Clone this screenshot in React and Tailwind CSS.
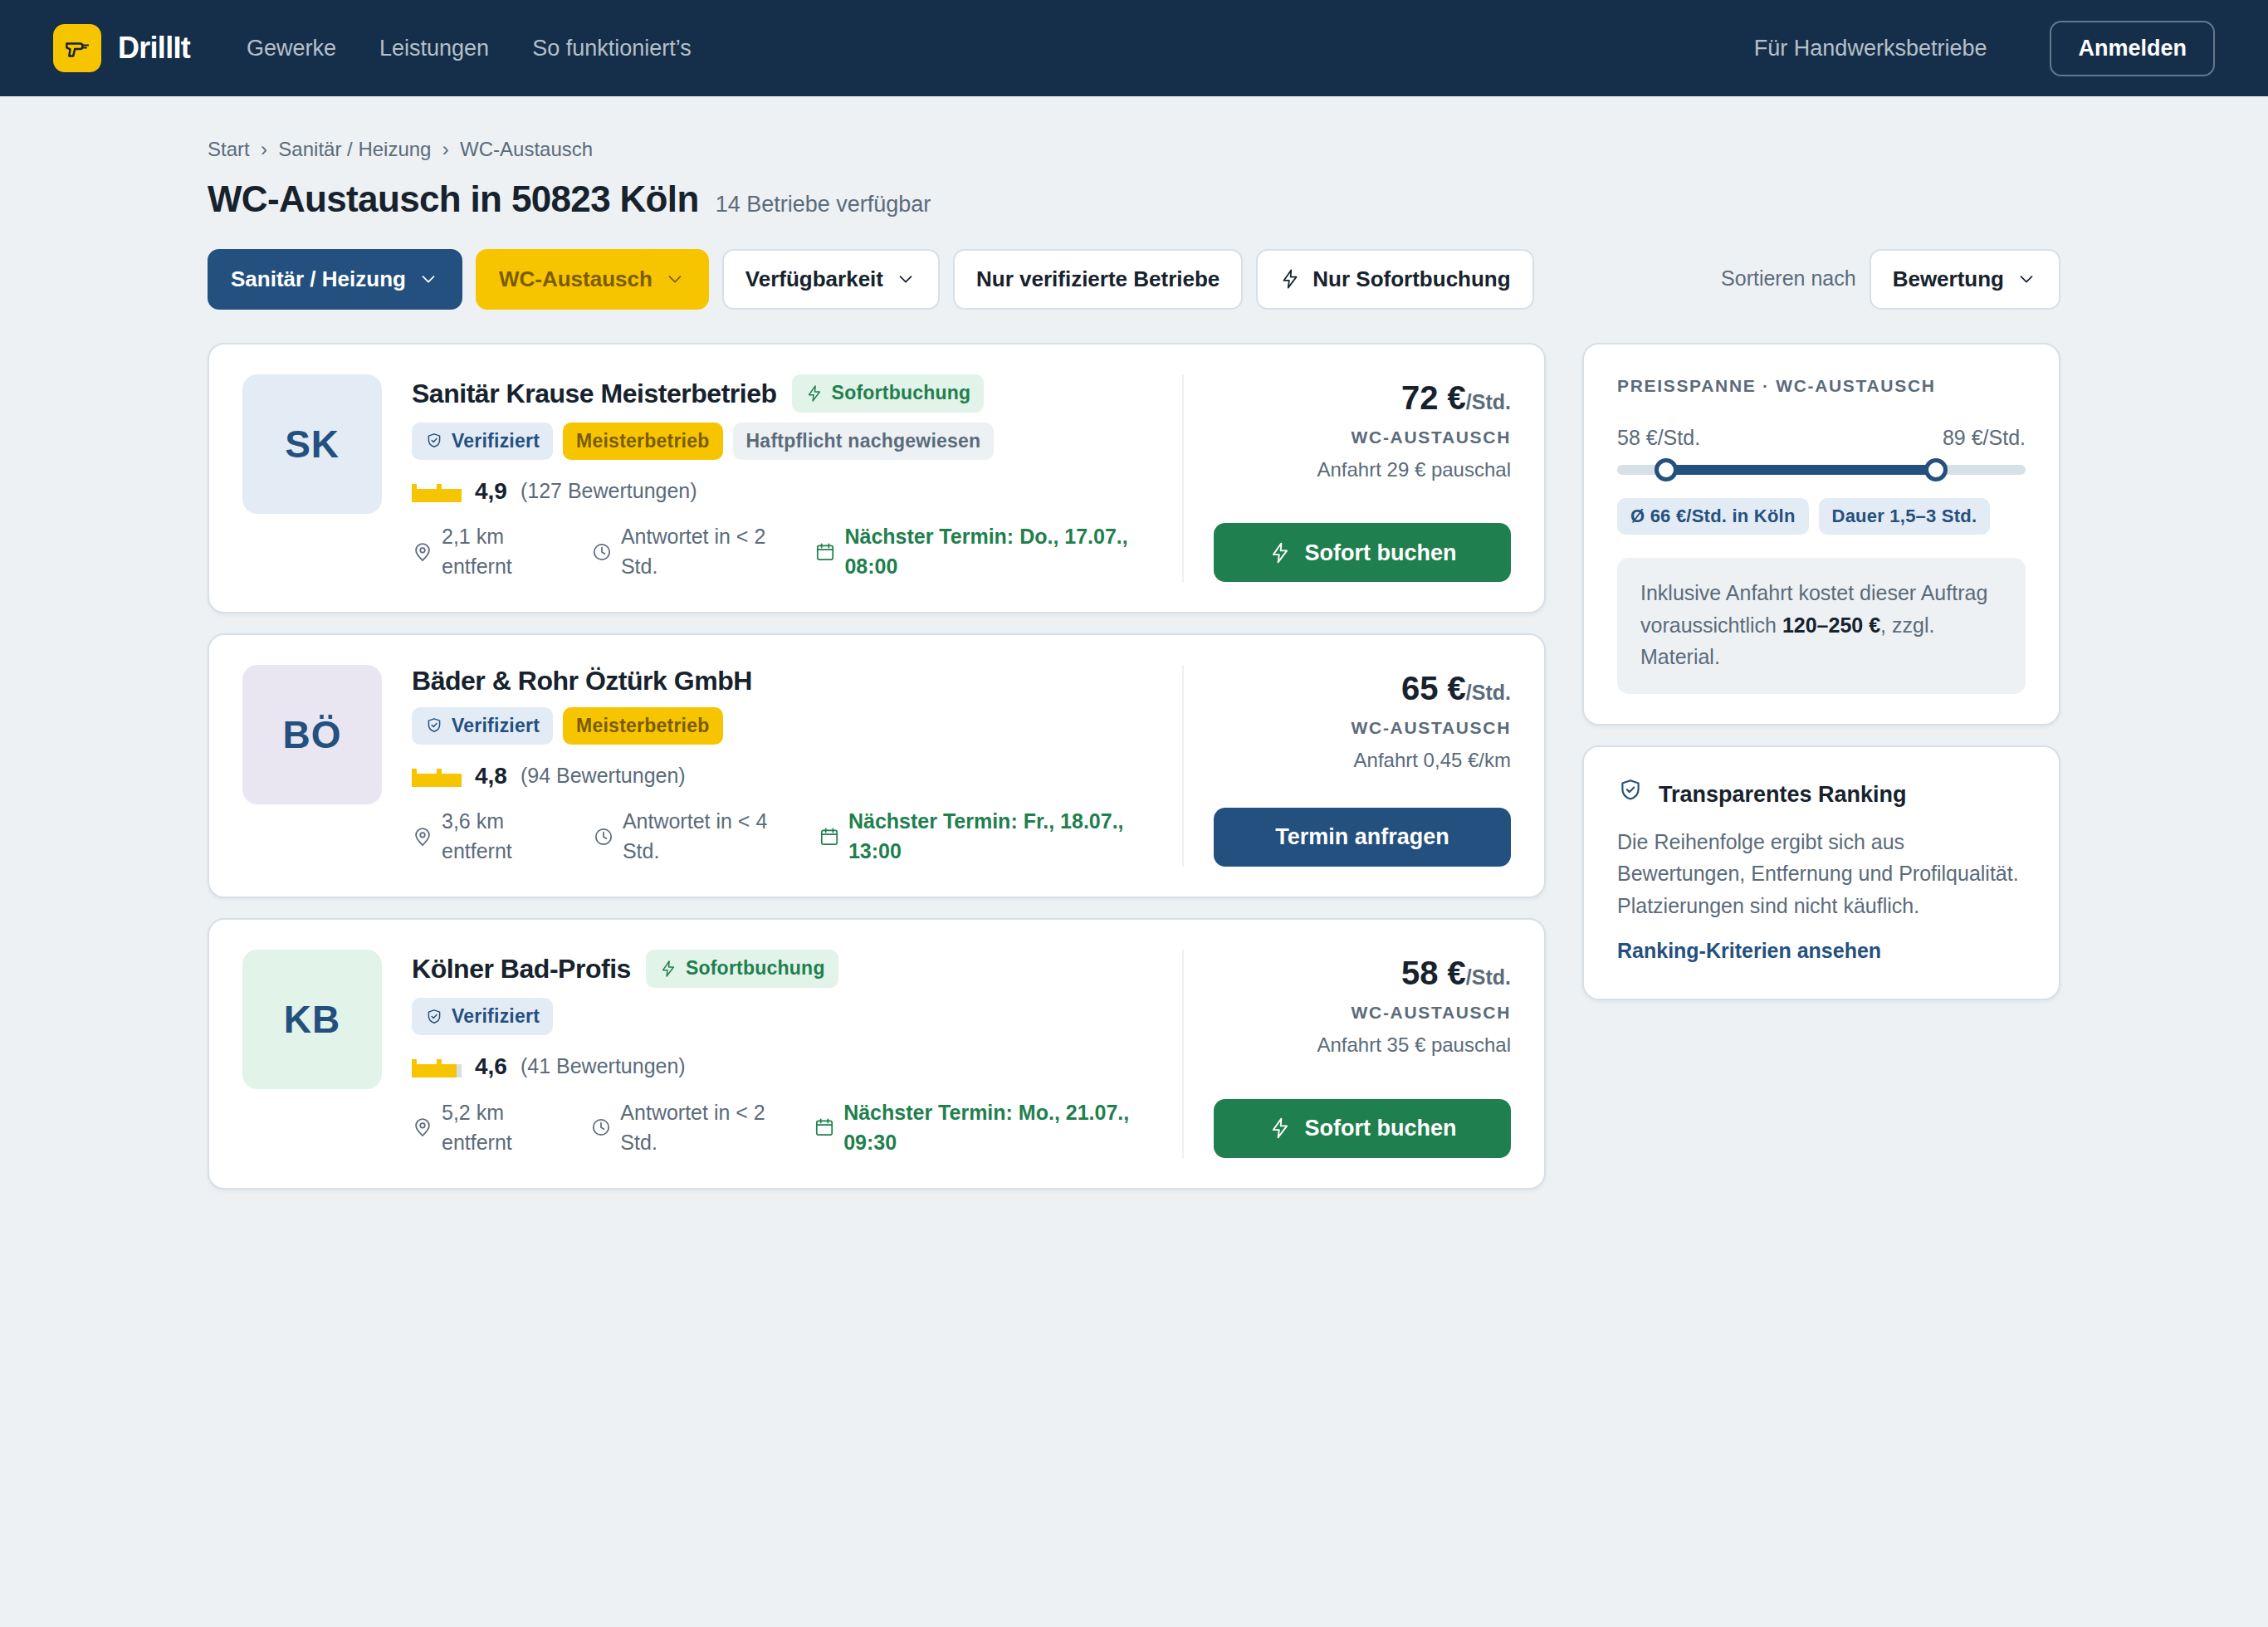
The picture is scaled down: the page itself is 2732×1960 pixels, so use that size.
import clsx from 'clsx';

function Svg({ className, children }) {
  return (
    <svg
      viewBox="0 0 24 24"
      fill="none"
      stroke="currentColor"
      strokeWidth="1.6"
      strokeLinecap="round"
      strokeLinejoin="round"
      className={clsx('shrink-0', className)}
    >
      {children}
    </svg>
  );
}

const Bolt = ({ className }) => (
  <Svg className={className}>
    <path d="M13.2 2.2 5 13.8h6L9.9 21.8 19 9.8h-6.4z" />
  </Svg>
);

const Shield = ({ className }) => (
  <Svg className={className}>
    <path d="M12 3.1l7.2 2.5v5.6c0 4.2-2.8 7.2-7.2 8.7-4.4-1.5-7.2-4.5-7.2-8.7V5.6z" />
    <path d="M8.9 11.4l2.3 2.2 4-4.2" />
  </Svg>
);

const Chevron = ({ className }) => (
  <Svg className={className}>
    <path d="M6 9.4l6 6 6-6" />
  </Svg>
);

const Pin = ({ className }) => (
  <Svg className={className}>
    <path d="M12 21.3c4.2-4 7.3-7.6 7.3-11.1a7.3 7.3 0 0 0-14.6 0c0 3.5 3.1 7.1 7.3 11.1z" />
    <circle cx="12" cy="10" r="2.6" />
  </Svg>
);

const Clock = ({ className }) => (
  <Svg className={className}>
    <circle cx="12" cy="12" r="8.5" />
    <path d="M12 7v5l3.2 2" />
  </Svg>
);

const Calendar = ({ className }) => (
  <Svg className={className}>
    <rect x="3.5" y="5" width="17" height="15.5" rx="2" />
    <path d="M3.5 9.4h17M8 3v4M16 3v4" />
  </Svg>
);

function DrillLogo() {
  return (
    <div className="flex size-[58px] items-center justify-center rounded-[14px] bg-[#f7c500] pt-1 text-[#17222d]">
      <svg
        width="29"
        height="19"
        viewBox="0 0 29 19"
        fill="none"
        stroke="currentColor"
        strokeWidth="2.5"
        strokeLinejoin="round"
      >
        <path d="M1.4 1.5H17.5c1.8 0 2.8.9 2.8 2.3v1.8c0 1.5-1 2.5-2.8 2.5H11.2L9.2 16.4H4.4L5.5 8.3 1.4 6.4z" />
        <path d="M20.5 3.4H28M20.5 6.5H25.8" strokeWidth="2" />
      </svg>
    </div>
  );
}

function Header() {
  return (
    <header className="flex h-[116px] items-center bg-[#152f4b] px-16 text-[27px] text-[#b6c0ca]">
      <DrillLogo />
      <span className="ml-5 text-4xl font-bold tracking-[-0.02em] text-white">DrillIt</span>
      <nav className="ml-[68px] flex gap-[52px]">
        <a>Gewerke</a>
        <a>Leistungen</a>
        <a>So funktioniert’s</a>
      </nav>
      <a className="ml-auto">Für Handwerksbetriebe</a>
      <button className="ml-[76px] h-[67px] rounded-[14px] border-2 border-white/35 px-8 font-bold text-white">
        Anmelden
      </button>
    </header>
  );
}

function FilterButton({ children, tone = 'plain', chevron = false, bolt = false }) {
  return (
    <button
      className={clsx(
        'flex h-[73px] items-center gap-[14px] rounded-[14px] border-2 px-[26px] text-[26px] font-bold',
        tone === 'plain' && 'border-[#d7dfe7] bg-white text-[#17222d]',
        tone === 'blue' && 'border-[#24507f] bg-[#24507f] text-white',
        tone === 'yellow' && 'border-[#f7c500] bg-[#f7c500] text-[#7a5c00]'
      )}
    >
      {bolt && <Bolt className="size-[26px]" />}
      {children}
      {chevron && <Chevron className="size-[26px]" />}
    </button>
  );
}

function Chip({ children, className }) {
  return (
    <span
      className={clsx(
        'flex items-center gap-[10px] rounded-[10px] px-4 text-[23px] font-bold tracking-[0.01em] whitespace-nowrap',
        className
      )}
    >
      {children}
    </span>
  );
}

// Brick-shaped rating bar, filled in ten steps
function Bricks({ score }) {
  const width = Math.round(score * 2) * 6;
  return (
    <svg width="60" height="22" viewBox="0 0 60 22" shapeRendering="crispEdges" className="mt-1">
      <rect y="6" width="60" height="16" className="fill-[#d7dfe7]" />
      <path d={`M0 0h6v6h24V0h6v6h${width - 36}v16H0z`} className="fill-[#f7c500]" />
    </svg>
  );
}

function ProviderCard({ p }) {
  return (
    <article className="flex rounded-[20px] border-2 border-[#d7dfe7] bg-white px-10 py-9 shadow-[0_2px_4px_rgba(21,47,76,0.06)]">
      <div
        className={clsx(
          'flex size-[168px] shrink-0 items-center justify-center rounded-[18px] pt-[0.5px] text-[46px] font-bold tracking-[0.02em] text-[#24507f]',
          p.avatar
        )}
      >
        {p.initials}
      </div>

      <div className="ml-9 w-[892px]">
        <div className="flex items-center gap-[18px]">
          <h2 className="text-[32px] leading-[1.2] font-bold tracking-[-0.015em]">{p.name}</h2>
          {p.instant && (
            <Chip className="h-[46px] bg-[#e2f3e9] text-[#1f7f4e]">
              <Bolt className="size-[22px]" />
              <span className="pb-px">Sofortbuchung</span>
            </Chip>
          )}
        </div>

        <div className="mt-3 flex gap-3">
          <Chip className="h-[45px] bg-[#e3ebf5] text-[#24507f]">
            <Shield className="size-[22px]" />
            Verifiziert
          </Chip>
          {p.master && <Chip className="h-[45px] bg-[#f7c500] text-[#7a5c00]">Meisterbetrieb</Chip>}
          {p.insured && (
            <Chip className="h-[45px] bg-[#edf1f4] text-[#5b6b7a]">Haftpflicht nachgewiesen</Chip>
          )}
        </div>

        <div className="mt-[16.5px] flex h-[43px] items-center gap-4">
          <Bricks score={p.score} />
          <span className="text-[28px] font-bold">{p.rating}</span>
          <span className="text-[25px] text-[#5b6b7a]">{`(${p.reviews} Bewertungen)`}</span>
        </div>

        <div className="mt-[15px] flex gap-8 pb-px text-[25px] leading-9 text-[#5b6b7a]">
          <span className="flex items-center gap-[10px]">
            <Pin className="mt-px size-[26px]" />
            {`${p.distance} entfernt`}
          </span>
          <span className="flex items-center gap-[10px]">
            <Clock className="mt-px size-[26px]" />
            {`Antwortet in < ${p.response} Std.`}
          </span>
          <span className="flex items-center gap-[10px] font-bold text-[#1f7f4e]">
            <Calendar className="mt-px size-[26px]" />
            {`Nächster Termin: ${p.next}`}
          </span>
        </div>
      </div>

      <div className="ml-9 flex w-[396px] shrink-0 flex-col border-l-2 border-[#edf1f4] pl-9 text-right">
        <div className="text-[40px] leading-[56px] font-bold">
          {`${p.price} €`}
          <span className="text-[25px] leading-none text-[#5b6b7a]">/Std.</span>
        </div>
        <div className="mt-1 text-[21px] leading-[1.5] font-bold tracking-[0.08em] text-[#5b6b7a]">
          WC-AUSTAUSCH
        </div>
        <div className="mt-[5.5px] text-2xl leading-[1.5] text-[#5b6b7a]">{`Anfahrt ${p.travel}`}</div>
        <button
          className={clsx(
            'mt-auto flex h-[71px] items-center justify-center gap-4 rounded-[14px] text-[27px] font-bold text-white',
            p.instant ? 'bg-[#1f7f4e]' : 'bg-[#24507f]'
          )}
        >
          {p.instant && <Bolt className="size-7" />}
          {p.instant ? 'Sofort buchen' : 'Termin anfragen'}
        </button>
      </div>
    </article>
  );
}

const providers = [
  {
    initials: 'SK',
    avatar: 'bg-[#e3ebf5]',
    name: 'Sanitär Krause Meisterbetrieb',
    instant: true,
    master: true,
    insured: true,
    score: 4.9,
    rating: '4,9',
    reviews: 127,
    distance: '2,1 km',
    response: 2,
    next: 'Do., 17.07., 08:00',
    price: 72,
    travel: '29 € pauschal',
  },
  {
    initials: 'BÖ',
    avatar: 'bg-[#e9e6f1]',
    name: 'Bäder & Rohr Öztürk GmbH',
    master: true,
    score: 4.8,
    rating: '4,8',
    reviews: 94,
    distance: '3,6 km',
    response: 4,
    next: 'Fr., 18.07., 13:00',
    price: 65,
    travel: '0,45 €/km',
  },
  {
    initials: 'KB',
    avatar: 'bg-[#e2f3e9]',
    name: 'Kölner Bad-Profis',
    instant: true,
    score: 4.6,
    rating: '4,6',
    reviews: 41,
    distance: '5,2 km',
    response: 2,
    next: 'Mo., 21.07., 09:30',
    price: 58,
    travel: '35 € pauschal',
  },
];

function PriceRange() {
  return (
    <section className="rounded-[20px] border-2 border-[#d7dfe7] bg-white px-10 py-9 text-[25px] text-[#5b6b7a] shadow-[0_2px_4px_rgba(21,47,76,0.06)]">
      <h3 className="text-[21px] leading-[27px] font-bold tracking-[0.08em]">PREISSPANNE · WC-AUSTAUSCH</h3>
      <div className="mt-[31px] flex justify-between leading-9">
        <span>58 €/Std.</span>
        <span>89 €/Std.</span>
      </div>
      <div className="relative mt-[15px] h-3 rounded-full bg-[#d7dfe7]">
        <div className="absolute inset-y-0 right-[22%] left-[12%] bg-[#24507f]" />
        <div className="absolute -top-2 left-[12%] size-7 -translate-x-1/2 rounded-full border-[5px] border-[#24507f] bg-white" />
        <div className="absolute -top-2 left-[78%] size-7 -translate-x-1/2 rounded-full border-[5px] border-[#24507f] bg-white" />
      </div>
      <div className="mt-7 flex gap-3 text-[22px] leading-[44px] font-bold tracking-[0.01em] text-[#24507f]">
        <span className="rounded-[10px] bg-[#e3ebf5] px-4">Ø 66 €/Std. in Köln</span>
        <span className="rounded-[10px] bg-[#e3ebf5] px-4">Dauer 1,5–3 Std.</span>
      </div>
      <p className="mt-7 rounded-[14px] bg-[#edf1f4] px-7 pt-[23px] pb-[25px] leading-[1.55]">
        Inklusive Anfahrt kostet dieser Auftrag voraussichtlich{' '}
        <strong className="text-[#17222d]">120–250 €</strong>, zzgl. Material.
      </p>
    </section>
  );
}

function RankingInfo() {
  return (
    <section className="rounded-[20px] border-2 border-[#d7dfe7] bg-white px-10 pt-9 pb-[37.5px] text-[25px] leading-[1.55] text-[#5b6b7a] shadow-[0_2px_4px_rgba(21,47,76,0.06)]">
      <div className="flex gap-[18px]">
        <Shield className="size-8 text-[#24507f]" />
        <h3 className="pt-px text-[27px] leading-[1.5] font-bold text-[#17222d]">Transparentes Ranking</h3>
      </div>
      <p className="mt-[17px]">
        Die Reihenfolge ergibt sich aus Bewertungen, Entfernung und Profilqualität. Platzierungen sind nicht
        käuflich.
      </p>
      <a className="mt-[15.5px] block font-bold text-[#24507f]">Ranking-Kriterien ansehen</a>
    </section>
  );
}

export default function App() {
  return (
    <div className="min-h-[1960px] bg-[#edf1f4] font-['Liberation_Sans',Arial,sans-serif] text-[#17222d]">
      <Header />
      <main className="mx-auto w-[2232px] pt-[46px]">
        <div className="text-2xl leading-9 text-[#5b6b7a]">
          Start&nbsp; ›&nbsp; Sanitär / Heizung&nbsp; ›&nbsp; WC-Austausch
        </div>
        <div className="mt-4 flex items-baseline gap-5">
          <h1 className="text-[44px] leading-[1.2] font-bold tracking-[-0.015em]">WC-Austausch in 50823 Köln</h1>
          <span className="text-[27px] text-[#5b6b7a]">14 Betriebe verfügbar</span>
        </div>

        <div className="mt-[33px] flex items-center gap-4">
          <FilterButton tone="blue" chevron>Sanitär / Heizung</FilterButton>
          <FilterButton tone="yellow" chevron>WC-Austausch</FilterButton>
          <FilterButton chevron>Verfügbarkeit</FilterButton>
          <FilterButton>Nur verifizierte Betriebe</FilterButton>
          <FilterButton bolt>Nur Sofortbuchung</FilterButton>
          <span className="ml-auto pb-px text-[25px] text-[#5b6b7a]">Sortieren nach</span>
          <FilterButton chevron>Bewertung</FilterButton>
        </div>

        <div className="mt-10 flex items-start gap-11">
          <div className="flex w-[1612px] flex-col gap-6">
            {providers.map(p => (
              <ProviderCard key={p.initials} p={p} />
            ))}
          </div>
          <aside className="flex w-[576px] flex-col gap-6">
            <PriceRange />
            <RankingInfo />
          </aside>
        </div>
      </main>
    </div>
  );
}
